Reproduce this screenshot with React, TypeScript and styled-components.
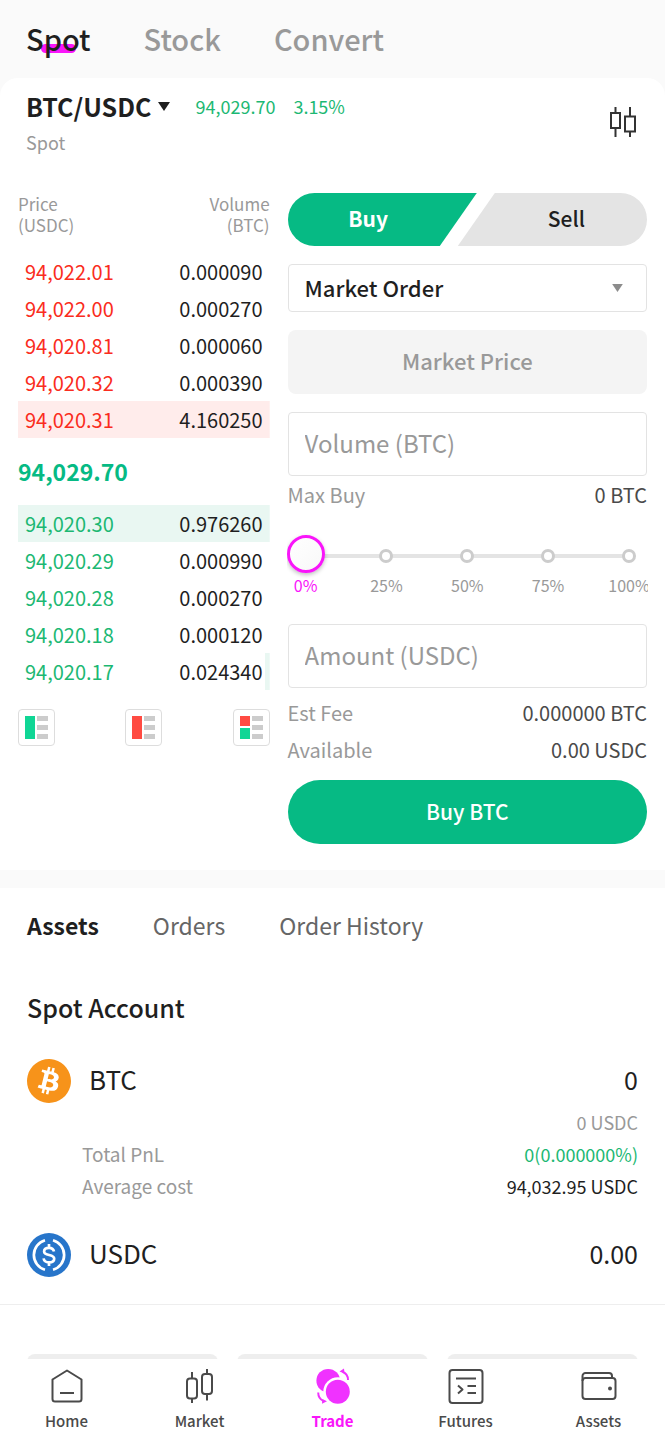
import React, { useState } from "react";
import styled, { createGlobalStyle, css } from "styled-components";
import { SiBitcoin } from "react-icons/si";

const color = {
  ink: "#1f1f1f",
  body: "#4a4a4a",
  muted: "#999999",
  line: "#e3e3e3",
  surface: "#fafafa",
  up: "#1cb873",
  down: "#fa2c20",
  action: "#06ba84",
  accent: "#f915fa",
};

const GlobalStyle = createGlobalStyle`
  *, *::before, *::after { box-sizing: border-box; }
  body {
    margin: 0;
    background: #ffffff;
    color: ${color.ink};
    font-family: "Noto Sans CJK JP", "Noto Sans", sans-serif;
    font-size: 20px;
    line-height: 24px;
  }
  button, input, select { font: inherit; color: inherit; margin: 0; }
  button { border: 0; padding: 0; background: none; cursor: pointer; }
  h1, h2, p, dl, dd { margin: 0; font-weight: 400; }
`;

const Page = styled.div`
  display: flex;
  flex-direction: column;
  height: 100vh;
`;

const Scroller = styled.main`
  flex: 1;
  min-height: 0;
  overflow-y: auto;
  scrollbar-width: none;
  background: ${color.surface};
`;

const TopTabs = styled.nav`
  display: flex;
  gap: 53px;
  padding: 18px 26px 20px;
`;

const TopTab = styled.button<{ $active?: boolean }>`
  position: relative;
  z-index: 0;
  font-size: 29px;
  line-height: 40px;
  font-weight: 500;
  color: ${(p) => (p.$active ? color.ink : color.muted)};
  ${(p) =>
    p.$active &&
    css`
      &::after {
        content: "";
        position: absolute;
        z-index: -1;
        left: 15px;
        bottom: 5px;
        width: 35px;
        height: 9px;
        border-radius: 5px;
        background: ${color.accent};
      }
    `}
`;

const Card = styled.section`
  background: #ffffff;
  border-radius: 18px 18px 0 0;
  padding: 12px 18px 26px;
`;

const PairHeader = styled.header`
  display: flex;
  justify-content: space-between;
  align-items: center;
  padding: 0 10px 0 8px;
  margin-bottom: 35px;
`;

const PairLine = styled.div`
  display: flex;
  align-items: center;
`;

const PairButton = styled.button`
  display: flex;
  align-items: center;
  gap: 7px;
  font-size: 25px;
  line-height: 32px;
  font-weight: 700;
  margin-right: 25px;
`;

const Quote = styled.span`
  color: ${color.up};
  font-size: 18px;
  margin-right: 18px;
`;

const PairKind = styled.p`
  color: ${color.muted};
  font-size: 18px;
  line-height: 32px;
  margin-top: 4px;
`;

const Columns = styled.div`
  display: grid;
  grid-template-columns: minmax(0, 7fr) minmax(0, 10fr);
  gap: 18px;
  align-items: start;
`;

const Book = styled.table`
  width: 100%;
  border-collapse: collapse;

  th {
    height: 60px;
    padding: 0;
    vertical-align: top;
    font-size: 17px;
    line-height: 21px;
    font-weight: 400;
    color: ${color.muted};
    text-align: left;
  }
  th:last-child,
  td:last-child {
    text-align: right;
  }
`;

const Level = styled.tr<{ $side: "ask" | "bid"; $depth: number }>`
  height: 37px;
  background: ${(p) => {
    const tint = p.$side === "ask" ? "#ffeceb" : "#e9f7f2";
    return `linear-gradient(to left, ${tint} ${p.$depth}%, transparent ${p.$depth}%)`;
  }};

  td {
    padding: 0 7px;
  }
  td:first-child {
    color: ${(p) => (p.$side === "ask" ? color.down : color.up)};
  }
`;

const LastPrice = styled.td`
  height: 67px;
  font-size: 23px;
  font-weight: 700;
  color: ${color.action};
  &&& {
    padding: 0 0 2px;
    text-align: left;
  }
`;

const BookModes = styled.div`
  display: flex;
  justify-content: space-between;
  margin-top: 19px;
`;

const ModeButton = styled.button`
  display: flex;
  align-items: center;
  justify-content: center;
  width: 37px;
  height: 37px;
  border: 1px solid #dddddd;
  border-radius: 4px;
`;

const Form = styled.form`
  display: flex;
  flex-direction: column;
`;

const SideToggle = styled.div`
  display: flex;
  border-radius: 27px;
  overflow: hidden;
`;

const SideButton = styled.button<{ $side: "buy" | "sell" }>`
  flex: 1;
  height: 53px;
  font-size: 21px;
  font-weight: 500;
  ${(p) =>
    p.$side === "buy"
      ? css`
          padding: 0 28px 3px 0;
          font-weight: 700;
          color: #ffffff;
          background: ${color.action};
          clip-path: polygon(0 0, 100% 0, calc(100% - 37px) 100%, 0 100%);
        `
      : css`
          margin-left: -19px;
          padding: 0 0 3px 28px;
          background: #e4e4e4;
          clip-path: polygon(37px 0, 100% 0, 100% 100%, 0 100%);
        `}
`;

const SelectWrap = styled.div`
  display: grid;
  align-items: center;
  margin-top: 18px;

  > * {
    grid-area: 1 / 1;
  }
  > svg {
    justify-self: end;
    margin-right: 24px;
    pointer-events: none;
  }
`;

const OrderSelect = styled.select`
  appearance: none;
  width: 100%;
  height: 48px;
  padding: 0 16px 3px;
  border: 1px solid ${color.line};
  border-radius: 4px;
  background: #ffffff;
  font-size: 22px;
  line-height: 32px;
  font-weight: 500;
`;

const Field = styled.input`
  width: 100%;
  height: 64px;
  margin-top: 18px;
  padding: 0 16px 4px;
  border: 1px solid ${color.line};
  border-radius: 4px;
  background: #ffffff;
  font-size: 24px;

  &::placeholder {
    color: ${color.muted};
    opacity: 1;
  }
  &:disabled {
    border: 0;
    border-radius: 8px;
    background: #f4f4f4;
    text-align: center;
    font-size: 22px;
    font-weight: 500;
  }
`;

const Facts = styled.dl`
  & + button {
    margin-top: 12px;
  }
`;

const CostFacts = styled(Facts)`
  margin-top: 6px;
`;

const Fact = styled.div`
  display: flex;
  justify-content: space-between;
  line-height: 37px;

  dt {
    color: ${color.muted};
  }
  dd {
    color: ${color.body};
  }
`;

const SliderBlock = styled.div`
  overflow: hidden;
  margin: 17px -1px 0;
  padding: 5px 1px 9px;
`;

const SliderStack = styled.div`
  display: grid;

  > * {
    grid-area: 1 / 1;
  }
`;

const Stops = styled.div`
  display: flex;
  justify-content: space-between;
  align-items: center;
  padding-top: 4px;
  background: linear-gradient(#e4e4e4, #e4e4e4) center 19px / calc(100% - 36px) 4px no-repeat;
`;

const Stop = styled.span`
  width: 14px;
  height: 14px;
  margin: 0 11px;
  border: 3px solid #cccccc;
  border-radius: 50%;
  background: #ffffff;
`;

const thumb = css`
  width: 38px;
  height: 38px;
  border: 3px solid ${color.accent};
  border-radius: 50%;
  background: linear-gradient(135deg, #ffffff, #f8f8f8);
  box-shadow: 0 2px 4px rgba(0, 0, 0, 0.25);
`;

const Range = styled.input`
  appearance: none;
  width: calc(100% + 2px);
  height: 38px;
  margin: 0 -1px;
  background: none;

  &::-webkit-slider-thumb {
    appearance: none;
    ${thumb}
  }
  &::-moz-range-thumb {
    ${thumb}
  }
`;

const StopLabels = styled.div`
  display: flex;
  justify-content: space-between;
`;

const StopLabel = styled.span<{ $active: boolean }>`
  display: flex;
  justify-content: center;
  width: 36px;
  font-size: 16px;
  line-height: 24px;
  color: ${(p) => (p.$active ? color.accent : color.muted)};
`;

const Submit = styled.button`
  height: 64px;
  padding-bottom: 3px;
  border-radius: 32px;
  background: ${color.action};
  color: #ffffff;
  font-size: 21px;
  font-weight: 500;
`;

const Portfolio = styled.section`
  margin-top: 18px;
  padding: 19px 27px 27px;
  background: #ffffff;
  border-bottom: 1px solid #eeeeee;
`;

const SubTabs = styled.nav`
  display: flex;
  gap: 54px;
`;

const SubTab = styled.button<{ $active?: boolean }>`
  font-size: 23px;
  line-height: 36px;
  font-weight: ${(p) => (p.$active ? 700 : 400)};
  color: ${(p) => (p.$active ? color.ink : "#666666")};
`;

const AccountTitle = styled.h2`
  margin-top: 46px;
  font-size: 25px;
  line-height: 36px;
  font-weight: 500;
`;

const Asset = styled.article`
  margin-top: 34px;

  & + & {
    margin-top: 31px;
  }
`;

const AssetHead = styled.div`
  display: flex;
  align-items: center;
  gap: 18px;
  height: 44px;
  font-size: 26px;

  > span {
    padding-bottom: 4px;
  }
  > :last-child {
    margin-left: auto;
    font-size: 25px;
  }
`;

const AssetFacts = styled.dl`
  padding: 3px 0 0 55px;
`;

const AssetFact = styled.div<{ $tone?: string }>`
  display: flex;
  justify-content: space-between;
  line-height: 32px;

  dt {
    color: ${color.muted};
    font-size: 19px;
  }
  dd {
    margin-left: auto;
    font-size: 18px;
    color: ${(p) => p.$tone ?? color.ink};
  }
`;

const Shortcuts = styled.div`
  display: grid;
  grid-template-columns: repeat(3, 1fr);
  gap: 19px;
  padding: 49px 27px 0;
  height: 55px;
  overflow: hidden;
  background: #ffffff;
`;

const Shortcut = styled.div`
  height: 64px;
  border-radius: 8px;
  background: #eeeeee;
`;

const BottomNav = styled.nav`
  display: grid;
  grid-template-columns: repeat(5, 1fr);
  height: 81px;
  background: #ffffff;
`;

const NavItem = styled.a<{ $active?: boolean }>`
  display: flex;
  flex-direction: column;
  align-items: center;
  padding-top: 8px;
  gap: 6px;
  font-size: 15px;
  line-height: 20px;
  font-weight: ${(p) => (p.$active ? 700 : 500)};
  color: ${(p) => (p.$active ? color.accent : color.body)};
  text-decoration: none;
`;

const Caret = ({ size, fill }: { size: number; fill: string }) => (
  <svg width={size} height={size - 3} viewBox="0 0 12 9" aria-hidden="true">
    <path d="M0 0h12L6 9z" fill={fill} />
  </svg>
);

const ChartIcon = () => (
  <svg width="28" height="32" viewBox="0 0 28 32" fill="none" stroke="#333333" strokeWidth="2" aria-hidden="true">
    <path d="M2 7h9v15H2zM6.500 1v6M6.500 22v9M16 10.500h10v15H16zM21 1v9.500M21 25.500V31" />
  </svg>
);

const ModeIcon = ({ mode }: { mode: "bids" | "asks" | "both" }) => (
  <svg width="23" height="23" viewBox="0 0 23 23" aria-hidden="true">
    {mode === "bids" && <path d="M0 0h10v23H0z" fill="#10d695" />}
    {mode === "asks" && <path d="M0 0h10v23H0z" fill="#ff4b42" />}
    {mode === "both" && (
      <>
        <path d="M0 0h10v10H0z" fill="#ff4b42" />
        <path d="M0 12h10v11H0z" fill="#10d695" />
      </>
    )}
    <path d="M12 0h11v5H12zM12 9h11v5H12zM12 18h11v5H12z" fill="#cccccc" />
  </svg>
);

const UsdcIcon = () => (
  <svg width="44" height="44" viewBox="0 0 44 44" fill="none" aria-hidden="true">
    <circle cx="22" cy="22" r="22" fill="#2775ca" />
    <g stroke="#ffffff" strokeWidth="2.700">
      <path d="M18 7.200a15.400 15.400 0 0 0 0 29.600M26 7.200a15.400 15.400 0 0 1 0 29.600" />
      <path d="M27 18.500c-.5-2.500-2.300-3.700-5-3.700-3 0-4.900 1.400-4.900 3.600 0 5 10.100 2.200 10.100 7.300 0 2.300-2 3.700-5.200 3.700-3.100 0-5-1.400-5.400-4M22 11v4M22 29v4" />
    </g>
  </svg>
);

const navIcons: Record<string, React.ReactNode> = {
  Home: (
    <path d="M3.500 12.500 18 3.500l14.500 9V32a2.500 2.500 0 0 1-2.500 2.500H6A2.500 2.500 0 0 1 3.500 32zM11 26h14" />
  ),
  Market: (
    <>
      <rect x="5" y="11.500" width="10" height="20" rx="3" />
      <rect x="20" y="7" width="10" height="20" rx="3" />
      <path d="M10 5v6.500M10 31.500V36M25 2v5M25 27v6.500" />
    </>
  ),
  Trade: (
    <g fill="#f032ff" stroke="#f032ff">
      <circle cx="13.200" cy="13.700" r="11.800" stroke="none" />
      <circle cx="22.800" cy="24.700" r="14.500" fill="#ffffff" stroke="none" />
      <circle cx="22.800" cy="24.700" r="12" stroke="none" />
      <path d="M27.500 4.800c3.400 1.300 5.500 4.200 5.500 8.200M3.200 25.500c0 4 1.800 7 5.500 8.700" fill="none" />
      <path d="m24.500 4.500 4.500-3 .5 5zM12 34.300l-5 2.400.3-4.700z" stroke="none" />
    </g>
  ),
  Futures: (
    <>
      <rect x="1.500" y="3" width="33" height="33" rx="3" />
      <path d="M8 11.500h20M19.500 19h8.500M19.500 26h8.500M10 18.500l4.500 4-4.500 4" />
    </>
  ),
  Assets: (
    <>
      <rect x="1.500" y="11" width="33" height="21" rx="3" />
      <path d="M1.500 14V9a3 3 0 0 1 3-3H28a3 3 0 0 1 3 3v2" />
      <circle cx="29" cy="21.500" r="2" fill="currentColor" stroke="none" />
    </>
  ),
};

const NavIcon = ({ name }: { name: string }) => (
  <svg
    width="36"
    height="38"
    viewBox="0 0 36 38"
    fill="none"
    stroke="currentColor"
    strokeWidth="2"
    strokeLinejoin="round"
    aria-hidden="true"
  >
    {navIcons[name]}
  </svg>
);

type Row = [price: string, volume: string, depth: number];

const asks: Row[] = [
  ["94,022.01", "0.000090", 0],
  ["94,022.00", "0.000270", 0],
  ["94,020.81", "0.000060", 0],
  ["94,020.32", "0.000390", 0],
  ["94,020.31", "4.160250", 100],
];

const bids: Row[] = [
  ["94,020.30", "0.976260", 100],
  ["94,020.29", "0.000990", 0],
  ["94,020.28", "0.000270", 0],
  ["94,020.18", "0.000120", 0],
  ["94,020.17", "0.024340", 2],
];

const stops = [0, 25, 50, 75, 100];

const Levels = ({ rows, side }: { rows: Row[]; side: "ask" | "bid" }) => (
  <tbody>
    {rows.map(([price, volume, depth]) => (
      <Level key={price} $side={side} $depth={depth}>
        <td>{price}</td>
        <td>{volume}</td>
      </Level>
    ))}
  </tbody>
);

const OrderBook = () => (
  <div>
    <Book>
      <thead>
        <tr>
          <th scope="col">Price<br />(USDC)</th>
          <th scope="col">Volume<br />(BTC)</th>
        </tr>
      </thead>
      <Levels rows={asks} side="ask" />
      <tbody>
        <tr>
          <LastPrice colSpan={2}>94,029.70</LastPrice>
        </tr>
      </tbody>
      <Levels rows={bids} side="bid" />
    </Book>
    <BookModes>
      <ModeButton aria-label="Bids"><ModeIcon mode="bids" /></ModeButton>
      <ModeButton aria-label="Asks"><ModeIcon mode="asks" /></ModeButton>
      <ModeButton aria-label="Bids and asks"><ModeIcon mode="both" /></ModeButton>
    </BookModes>
  </div>
);

const OrderForm = () => {
  const [percent, setPercent] = useState(0);
  return (
    <Form onSubmit={(e) => e.preventDefault()}>
      <SideToggle>
        <SideButton type="button" $side="buy">Buy</SideButton>
        <SideButton type="button" $side="sell">Sell</SideButton>
      </SideToggle>
      <SelectWrap>
        <OrderSelect aria-label="Order type">
          <option>Market Order</option>
        </OrderSelect>
        <Caret size={11} fill="#8c8c8c" />
      </SelectWrap>
      <Field aria-label="Price" placeholder="Market Price" disabled />
      <Field aria-label="Volume (BTC)" placeholder="Volume (BTC)" />
      <Facts>
        <Fact>
          <dt>Max Buy</dt>
          <dd>0 BTC</dd>
        </Fact>
      </Facts>
      <SliderBlock>
        <SliderStack>
          <Stops>
            {stops.map((s) => <Stop key={s} />)}
          </Stops>
          <Range
            type="range"
            aria-label="Percent of balance"
            min={0}
            max={100}
            step={25}
            value={percent}
            onChange={(e) => setPercent(Number(e.target.value))}
          />
        </SliderStack>
        <StopLabels>
          {stops.map((s) => (
            <StopLabel key={s} $active={s === percent}>{s}%</StopLabel>
          ))}
        </StopLabels>
      </SliderBlock>
      <Field aria-label="Amount (USDC)" placeholder="Amount (USDC)" />
      <CostFacts>
        <Fact>
          <dt>Est Fee</dt>
          <dd>0.000000 BTC</dd>
        </Fact>
        <Fact>
          <dt>Available</dt>
          <dd>0.00 USDC</dd>
        </Fact>
      </CostFacts>
      <Submit type="submit">Buy BTC</Submit>
    </Form>
  );
};

export default function App() {
  return (
    <>
      <GlobalStyle />
      <Page>
        <Scroller>
          <TopTabs>
            <TopTab $active>Spot</TopTab>
            <TopTab>Stock</TopTab>
            <TopTab>Convert</TopTab>
          </TopTabs>
          <Card>
            <PairHeader>
              <div>
                <PairLine>
                  <PairButton>
                    BTC/USDC
                    <Caret size={12} fill={color.ink} />
                  </PairButton>
                  <Quote>94,029.70</Quote>
                  <Quote>3.15%</Quote>
                </PairLine>
                <PairKind>Spot</PairKind>
              </div>
              <button aria-label="Chart"><ChartIcon /></button>
            </PairHeader>
            <Columns>
              <OrderBook />
              <OrderForm />
            </Columns>
          </Card>
          <Portfolio>
            <SubTabs>
              <SubTab $active>Assets</SubTab>
              <SubTab>Orders</SubTab>
              <SubTab>Order History</SubTab>
            </SubTabs>
            <AccountTitle>Spot Account</AccountTitle>
            <Asset>
              <AssetHead>
                <SiBitcoin size={44} color="#f7931a" />
                <span>BTC</span>
                <span>0</span>
              </AssetHead>
              <AssetFacts>
                <AssetFact $tone={color.muted}>
                  <dd>0 USDC</dd>
                </AssetFact>
                <AssetFact $tone={color.up}>
                  <dt>Total PnL</dt>
                  <dd>0(0.000000%)</dd>
                </AssetFact>
                <AssetFact>
                  <dt>Average cost</dt>
                  <dd>94,032.95 USDC</dd>
                </AssetFact>
              </AssetFacts>
            </Asset>
            <Asset>
              <AssetHead>
                <UsdcIcon />
                <span>USDC</span>
                <span>0.00</span>
              </AssetHead>
            </Asset>
          </Portfolio>
          <Shortcuts>
            <Shortcut />
            <Shortcut />
            <Shortcut />
          </Shortcuts>
        </Scroller>
        <BottomNav>
          {Object.keys(navIcons).map((name) => (
            <NavItem key={name} href="#" $active={name === "Trade"}>
              <NavIcon name={name} />
              {name}
            </NavItem>
          ))}
        </BottomNav>
      </Page>
    </>
  );
}
